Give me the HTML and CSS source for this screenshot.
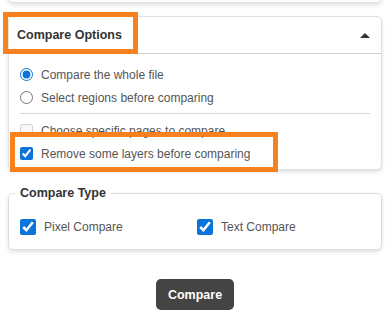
FILE: index.html
```html
<!DOCTYPE html>
<html lang="en">
<head>
    <meta charset="UTF-8" />
    <title>Compare Options</title>
    <link rel="stylesheet" href="styles.css">
</head>
<body>
    <div class="page">
        <div class="card card-top"></div>

        <div class="card options-card">
            <div class="card-header">
                <span class="header-title">Compare Options</span>
                <span class="caret"></span>
                <span class="highlight highlight-header"></span>
            </div>
            <div class="card-body">
                <label class="option">
                    <input type="radio" name="scope" checked />
                    <span>Compare the whole file</span>
                </label>
                <label class="option">
                    <input type="radio" name="scope" />
                    <span>Select regions before comparing</span>
                </label>

                <hr class="divider" />

                <label class="option">
                    <input type="checkbox" disabled />
                    <span>Choose specific pages to compare</span>
                </label>
                <label class="option option-marked">
                    <input type="checkbox" checked />
                    <span>Remove some layers before comparing</span>
                    <span class="highlight highlight-row"></span>
                </label>
            </div>
        </div>

        <fieldset class="type-box">
            <legend>Compare Type</legend>
            <div class="type-grid">
                <label class="type-option">
                    <input type="checkbox" checked />
                    <span>Pixel Compare</span>
                </label>
                <label class="type-option">
                    <input type="checkbox" checked />
                    <span>Text Compare</span>
                </label>
            </div>
        </fieldset>

        <div class="actions">
            <button type="button" class="btn-compare">Compare</button>
        </div>
    </div>
</body>
</html>
```

FILE: styles.css
```css
body {
    font-family: "Liberation Sans", Arial, sans-serif;
    background-color: #fff;
    margin: 0;
    color: #555;
}

.page {
    padding: 0 6px 0 8px;
}

.card {
    background: #fff;
    border: 1px solid #e0e0e0;
    border-radius: 5px;
    box-shadow: 0 2px 4px rgba(0,0,0,0.12);
}

.card-top {
    height: 10px;
    margin-top: -9px;
}

.options-card {
    margin-top: 13px;
    position: relative;
}

.card-header {
    position: relative;
    height: 36px;
    display: flex;
    align-items: center;
    justify-content: space-between;
    padding: 0 11px 0 8px;
    border-bottom: 1px solid #cfcfcf;
}

.header-title {
    font-size: 12.5px;
    font-weight: bold;
    color: #333;
}

.caret {
    width: 0;
    height: 0;
    border-left: 5px solid transparent;
    border-right: 5px solid transparent;
    border-bottom: 5px solid #333;
}

.highlight {
    position: absolute;
    border: 5px solid #f7811f;
    box-sizing: border-box;
    pointer-events: none;
}

.highlight-header {
    left: -6px;
    top: -5px;
    width: 135px;
    height: 42px;
}

.card-body {
    padding: 9px 11px 4px;
}

.option {
    position: relative;
    display: flex;
    align-items: center;
    height: 23px;
    font-size: 12px;
}

    .option input {
        margin: 0 8px 0 0;
        width: 13px;
        height: 13px;
        accent-color: #0a74da;
    }

.divider {
    border: none;
    border-top: 1px solid #d6d6d6;
    margin: 4px 0 5px;
}

.highlight-row {
    left: -10px;
    top: -10px;
    width: 268px;
    height: 40px;
}

.type-box {
    margin: 16px 0 0;
    padding: 0 11px 10px;
    border: 1px solid #dcdcdc;
    border-radius: 5px;
    box-shadow: 0 2px 4px rgba(0,0,0,0.12);
}

    .type-box legend {
        font-size: 12.5px;
        font-weight: bold;
        color: #333;
        padding: 0 5px;
        margin-left: -5px;
        line-height: 15px;
    }

.type-grid {
    display: grid;
    grid-template-columns: 177px 1fr;
    padding-top: 14px;
}

.type-option {
    display: flex;
    align-items: center;
    height: 24px;
    font-size: 12px;
}

    .type-option input {
        margin: 0 8px 0 0;
        width: 16px;
        height: 16px;
        accent-color: #0a74da;
    }

.actions {
    display: flex;
    justify-content: center;
    margin-top: 29px;
}

.btn-compare {
    height: 31px;
    padding: 0 12px;
    background: #444;
    color: #fff;
    border: none;
    border-radius: 5px;
    font-family: "Liberation Sans", Arial, sans-serif;
    font-size: 12.5px;
    font-weight: bold;
    cursor: pointer;
}
```
